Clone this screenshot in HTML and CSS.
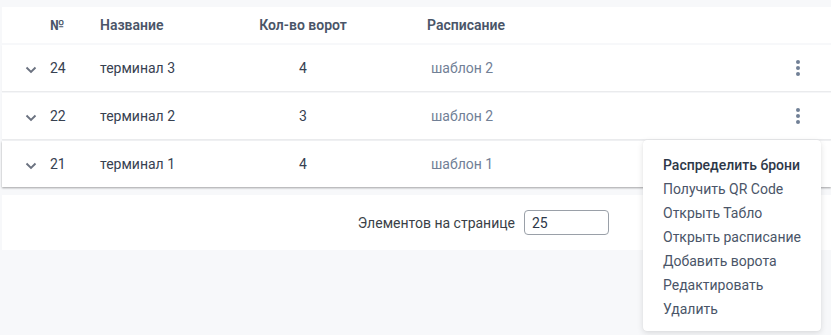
FILE: index.html
```html
<!DOCTYPE html>
<html lang="ru">
<head>
<meta charset="utf-8">
<title>Терминалы</title>
<link rel="stylesheet" href="styles.css">
</head>
<body>
<div class="page">
  <div class="table">
    <div class="row head">
      <div></div>
      <div>№</div>
      <div>Название</div>
      <div class="center">Кол-во ворот</div>
      <div></div>
      <div>Расписание</div>
      <div></div>
    </div>
    <div class="row item">
      <div class="chev"><svg width="12" height="8" viewBox="0 0 12 8"><path d="M1.5 1.5 L6 6 L10.5 1.5" fill="none" stroke="#6b7280" stroke-width="1.9"/></svg></div>
      <div>24</div>
      <div>терминал 3</div>
      <div class="center">4</div>
      <div></div>
      <div class="sched">шаблон 2</div>
      <div class="act"><svg width="6" height="16" viewBox="0 0 6 16"><circle cx="3" cy="2" r="2"/><circle cx="3" cy="8" r="2"/><circle cx="3" cy="14" r="2"/></svg></div>
    </div>
    <div class="row item">
      <div class="chev"><svg width="12" height="8" viewBox="0 0 12 8"><path d="M1.5 1.5 L6 6 L10.5 1.5" fill="none" stroke="#6b7280" stroke-width="1.9"/></svg></div>
      <div>22</div>
      <div>терминал 2</div>
      <div class="center">3</div>
      <div></div>
      <div class="sched">шаблон 2</div>
      <div class="act"><svg width="6" height="16" viewBox="0 0 6 16"><circle cx="3" cy="2" r="2"/><circle cx="3" cy="8" r="2"/><circle cx="3" cy="14" r="2"/></svg></div>
    </div>
    <div class="row item last">
      <div class="chev"><svg width="12" height="8" viewBox="0 0 12 8"><path d="M1.5 1.5 L6 6 L10.5 1.5" fill="none" stroke="#6b7280" stroke-width="1.9"/></svg></div>
      <div>21</div>
      <div>терминал 1</div>
      <div class="center">4</div>
      <div></div>
      <div class="sched">шаблон 1</div>
      <div class="act"></div>
    </div>
  </div>
  <div class="footer">
    <span class="label">Элементов на странице</span>
    <div class="input">25</div>
  </div>
  <div class="menu">
    <div class="mi active">Распределить брони</div>
    <div class="mi">Получить QR Code</div>
    <div class="mi">Открыть Табло</div>
    <div class="mi">Открыть расписание</div>
    <div class="mi">Добавить ворота</div>
    <div class="mi">Редактировать</div>
    <div class="mi">Удалить</div>
  </div>
</div>
</body>
</html>
```
FILE: styles.css
```css
html, body {
  margin: 0;
  padding: 0;
}
body {
  background: #f7f8fa;
  font-family: Roboto, "Liberation Sans", Arial, sans-serif;
  font-size: 14px;
  color: #374151;
  width: 831px;
  height: 335px;
  overflow: hidden;
}
.page {
  position: relative;
  padding: 7px 0 0 2px;
}
.table {
  display: flex;
  flex-direction: column;
  gap: 2px;
}
.row {
  display: grid;
  grid-template-columns: 48px 50px 150px 106px 71px 1fr 68px;
  align-items: center;
  background: #fff;
}
.head {
  height: 36px;
  font-weight: 600;
  color: #4a5568;
}
.item {
  height: 46px;
  box-shadow: 0 1px 1px rgba(0, 0, 0, 0.05);
}
.item.last {
  box-shadow: 0 1px 2px rgba(0, 0, 0, 0.35);
}
.center {
  text-align: center;
}
.chev {
  display: flex;
  justify-content: flex-end;
  padding-right: 13px;
  padding-top: 4px;
}
.chev svg {
  display: block;
}
.sched {
  color: #718096;
  padding-left: 4px;
}
.act {
  display: flex;
  padding-left: 32px;
}
.act svg {
  display: block;
  fill: #718096;
}
.footer {
  margin-top: 8px;
  height: 55px;
  background: #fff;
  display: flex;
  align-items: center;
  justify-content: flex-end;
  padding-right: 222px;
  gap: 9px;
}
.label {
  color: #3a3f47;
}
.input {
  width: 76px;
  height: 23px;
  border: 1px solid #9aa0a8;
  border-radius: 4px;
  padding-left: 7px;
  display: flex;
  align-items: center;
  color: #2d3748;
}
.menu {
  position: absolute;
  left: 643px;
  top: 140px;
  width: 178px;
  height: 191px;
  box-sizing: border-box;
  padding: 13px 0 10px 20px;
  background: #fff;
  border-radius: 4px;
  box-shadow: 0 2px 6px rgba(0, 0, 0, 0.12), 0 0 1px rgba(0, 0, 0, 0.1);
}
.mi {
  height: 24px;
  line-height: 24px;
  color: #4a5568;
  white-space: nowrap;
}
.mi.active {
  color: #2d3748;
  font-weight: 500;
}
```
